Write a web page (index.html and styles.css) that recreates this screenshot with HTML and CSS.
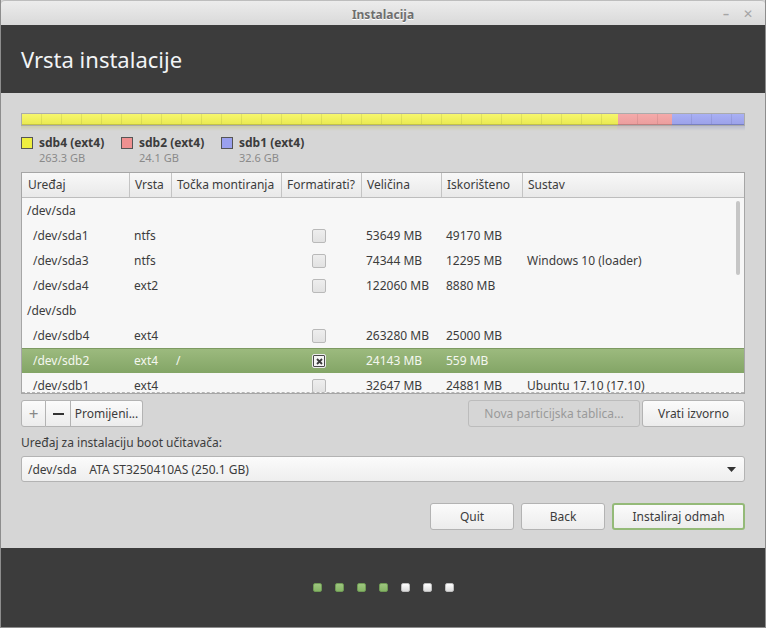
FILE: index.html
```html
<!DOCTYPE html>
<html>
<head>
<meta charset="utf-8">
<link rel="stylesheet" href="styles.css">
</head>
<body>
<div class="window">
  <div class="titlebar">
    <span class="title">Instalacija</span>
    <span class="wbtns"><span class="wmin">–</span><span class="wclose">✕</span></span>
  </div>
  <div class="header"><h1>Vrsta instalacije</h1></div>
  <div class="content">
    <div class="partbar">
      <div class="seg yellow" style="width:596px"></div>
      <div class="seg pink" style="width:54px"></div>
      <div class="seg blue" style="flex:1"></div>
    </div>
    <div class="reflect">
      <div class="rseg yellow" style="width:596px"></div>
      <div class="rseg pink" style="width:54px"></div>
      <div class="rseg blue" style="flex:1"></div>
    </div>
    <div class="legend">
      <div class="litem"><span class="sw yellow"></span><span class="lname">sdb4 (ext4)</span><span></span><span class="lsize">263.3 GB</span></div>
      <div class="litem"><span class="sw pink"></span><span class="lname">sdb2 (ext4)</span><span></span><span class="lsize">24.1 GB</span></div>
      <div class="litem"><span class="sw blue"></span><span class="lname">sdb1 (ext4)</span><span></span><span class="lsize">32.6 GB</span></div>
    </div>
    <div class="table">
      <div class="thead">
        <div class="th">Uređaj</div>
        <div class="th">Vrsta</div>
        <div class="th">Točka montiranja</div>
        <div class="th">Formatirati?</div>
        <div class="th">Veličina</div>
        <div class="th">Iskorišteno</div>
        <div class="th">Sustav</div>
      </div>
      <div class="tbody">
        <div class="row"><div class="td top">/dev/sda</div><div class="td"></div><div class="td"></div><div class="td"></div><div class="td"></div><div class="td"></div><div class="td"></div></div>
        <div class="row"><div class="td dev">/dev/sda1</div><div class="td">ntfs</div><div class="td"></div><div class="td chk"><span class="cb"></span></div><div class="td">53649 MB</div><div class="td">49170 MB</div><div class="td"></div></div>
        <div class="row"><div class="td dev">/dev/sda3</div><div class="td">ntfs</div><div class="td"></div><div class="td chk"><span class="cb"></span></div><div class="td">74344 MB</div><div class="td">12295 MB</div><div class="td">Windows 10 (loader)</div></div>
        <div class="row"><div class="td dev">/dev/sda4</div><div class="td">ext2</div><div class="td"></div><div class="td chk"><span class="cb"></span></div><div class="td">122060 MB</div><div class="td">8880 MB</div><div class="td"></div></div>
        <div class="row"><div class="td top">/dev/sdb</div><div class="td"></div><div class="td"></div><div class="td"></div><div class="td"></div><div class="td"></div><div class="td"></div></div>
        <div class="row"><div class="td dev">/dev/sdb4</div><div class="td">ext4</div><div class="td"></div><div class="td chk"><span class="cb"></span></div><div class="td">263280 MB</div><div class="td">25000 MB</div><div class="td"></div></div>
        <div class="row sel"><div class="td dev">/dev/sdb2</div><div class="td">ext4</div><div class="td">/</div><div class="td chk"><span class="cb on"><svg width="7" height="7" viewBox="0 0 7 7"><path d="M1 1L6 6M6 1L1 6" stroke="#3a3a3a" stroke-width="1.8"/></svg></span></div><div class="td">24143 MB</div><div class="td">559 MB</div><div class="td"></div></div>
        <div class="row"><div class="td dev">/dev/sdb1</div><div class="td">ext4</div><div class="td"></div><div class="td chk"><span class="cb"></span></div><div class="td">32647 MB</div><div class="td">24881 MB</div><div class="td">Ubuntu 17.10 (17.10)</div></div>
        <div class="scrollbar"></div>
      </div>
    </div>
    <div class="toolbar">
      <div class="group">
        <button class="btn sq plus">+</button><button class="btn sq minus"><svg width="11" height="2" viewBox="0 0 11 2"><rect width="11" height="2" fill="#333"/></svg></button><button class="btn prom">Promijeni...</button>
      </div>
      <div class="spacer"></div>
      <button class="btn disabled newtbl">Nova particijska tablica...</button>
      <button class="btn revert">Vrati izvorno</button>
    </div>
    <div class="label">Uređaj za instalaciju boot učitavača:</div>
    <div class="combo">
      <span>/dev/sda&nbsp;&nbsp;&nbsp; ATA ST3250410AS (250.1 GB)</span>
      <svg class="arrow" width="9" height="5" viewBox="0 0 9 5"><path d="M0 0H9L4.5 5Z" fill="#333"/></svg>
    </div>
    <div class="actions">
      <button class="btn act">Quit</button>
      <button class="btn act">Back</button>
      <button class="btn act primary">Instaliraj odmah</button>
    </div>
  </div>
  <div class="footer">
    <span class="dot g"></span><span class="dot g"></span><span class="dot g"></span><span class="dot g"></span><span class="dot w"></span><span class="dot w"></span><span class="dot w"></span>
  </div>
</div>
</body>
</html>
```
FILE: styles.css
```css
* { box-sizing: border-box; }
html, body { margin: 0; padding: 0; background: #3c3c3c; }
body { font-family: "Noto Sans", "DejaVu Sans", sans-serif; font-size: 12px; color: #3c3c3c; }

.window {
  width: 766px; height: 628px;
  border: 1px solid #8d8d8d; border-top: none;
  display: flex; flex-direction: column;
  overflow: hidden;
  background: #d6d6d6;
}

.titlebar {
  height: 25px; flex: none;
  background: linear-gradient(#ececec, #d9d9d9);
  border-top: 1px solid #bdbdbd;
  border-radius: 4px 4px 0 0;
  display: flex; align-items: center; justify-content: center;
  position: relative;
}
.title { font-weight: bold; font-size: 12px; color: #6e6e6e; text-shadow: 0 1px 0 #fff; margin-top: 2px; }
.wbtns { position: absolute; right: 12px; top: 4px; display: flex; gap: 14px; color: #a5a5a5; font-size: 12px; font-weight: bold; }
.wclose { font-size: 12px; }

.header { height: 68px; flex: none; background: #3c3c3c; display: flex; align-items: center; padding-left: 20px; }
.header h1 { margin: 0; font-weight: normal; font-size: 22px; color: #f2f4f6; letter-spacing: 0; margin-top: -1px; }

.content { height: 455px; flex: none; padding: 20px 20px 0 20px; background: #d6d6d6; }

.partbar {
  height: 13px; display: flex;
  border: 1px solid rgba(0,0,0,0.2);
}
.seg { height: 100%; position: relative; }
.seg.yellow { background: linear-gradient(#f6f66c, #eaea52); border-bottom: 1px solid #c2c248; }
.seg.pink { background: linear-gradient(#f4aaaa, #ec9e9e); border-bottom: 1px solid #c08080; }
.seg.blue { background: linear-gradient(#a9b0f4, #9ca2ea); border-bottom: 1px solid #7880c0; }
.partbar .seg::after {
  content: ""; position: absolute; inset: 0;
  background: repeating-linear-gradient(90deg, transparent 0 19px, rgba(0,0,0,0.08) 19px 20px);
}
.reflect { height: 5px; display: flex; opacity: 0.3; }
.rseg { height: 100%; -webkit-mask-image: linear-gradient(#000, transparent); mask-image: linear-gradient(#000, transparent); }
.rseg.yellow { background: #b8b850; }
.rseg.pink { background: #b88888; }
.rseg.blue { background: #8088c0; }

.legend { display: flex; margin-top: 5px; height: 36px; }
.litem {
  width: 100px; display: grid;
  grid-template-columns: 12px auto; column-gap: 6px; row-gap: 1px;
  align-content: start;
}
.sw { width: 12px; height: 12px; border: 1px solid #555; margin-top: 1px; }
.sw.yellow { background: #eeee40; }
.sw.pink { background: #ef9090; }
.sw.blue { background: #9aa0ee; }
.lname { font-weight: bold; font-size: 12px; line-height: 14px; color: #3c3c3c; }
.lsize { font-size: 11px; line-height: 14px; color: #8a8a8a; }

.table { border: 1px solid #a6a6a6; background: #f7f7f7; height: 222px; display: flex; flex-direction: column; }
.thead, .row {
  display: grid;
  grid-template-columns: 107px 42px 110px 80px 80px 81px 1fr;
}
.thead { height: 25px; background: linear-gradient(#f8f8f8, #e9e9e9); border-bottom: 1px solid #bdbdbd; flex: none; }
.th { padding-left: 6px; line-height: 24px; white-space: nowrap; overflow: hidden; color: #3c3c3c; }
.th + .th { border-left: 1px solid #c4c4c4; padding-left: 5px; }
.tbody { flex: 1; overflow: hidden; position: relative; border-bottom: 1px dashed #b4b4b4; }
.row { height: 25px; }
.td { line-height: 25px; white-space: nowrap; padding-left: 5px; color: #3c3c3c; }
.td:first-child { padding-left: 11px; }
.td.top:first-child { padding-left: 5px; }
.td.chk { display: flex; align-items: center; padding-left: 31px; }
.cb {
  width: 14px; height: 14px; border: 1px solid #b9b9b9; border-radius: 2px;
  background: linear-gradient(#eeeeee, #e2e2e2);
  display: flex; align-items: center; justify-content: center;
}
.cb.on { border: 1px solid #eaeaea; background: #f4f4f4; box-shadow: inset 0 0 0 1px #4a4a4a; }
.row.sel { background: linear-gradient(#9cba7e, #83a566); border-top: 1px solid #7d9a62; height: 25px; }
.row.sel .td { color: #f4f7f0; line-height: 23px; }
.scrollbar { position: absolute; right: 4px; top: 3px; width: 4px; height: 74px; border-radius: 2px; background: #c6c6c6; }

.toolbar { display: flex; margin-top: 6px; height: 27px; }
.group { display: flex; }
.spacer { flex: 1; }
.btn {
  font-family: inherit; font-size: 12px; color: #3c3c3c;
  background: linear-gradient(#fbfbfb, #ececec);
  border: 1px solid #b3b3b3; border-radius: 3px;
  height: 27px; padding: 0 6px; margin: 0;
  display: inline-flex; align-items: center; justify-content: center;
}
.group .btn { border-radius: 0; }
.group .btn:first-child { border-radius: 3px 0 0 3px; }
.group .btn:last-child { border-radius: 0 3px 3px 0; }
.group .btn + .btn { border-left: none; }
.sq { width: 25px; padding: 0; }
.plus { font-size: 17px; color: #888; font-weight: normal; }
.minus { width: 25px; }
.prom { width: 72px; }
.btn.disabled { background: #d6d6d6; color: #9a9a9a; border-color: #bcbcbc; }
.newtbl { width: 172px; margin-right: 2px; }
.revert { width: 103px; }

.label { margin-top: 8px; line-height: 16px; height: 16px; }
.combo {
  margin-top: 5px; height: 26px;
  border: 1px solid #b3b3b3; border-radius: 3px;
  background: linear-gradient(#fbfbfb, #eeeeee);
  display: flex; align-items: center; justify-content: space-between;
  padding: 0 8px 0 6px;
}
.actions { display: flex; justify-content: flex-end; gap: 7px; margin-top: 21px; }
.btn.act { width: 84px; }
.btn.primary { width: 133px; border: 2px solid #94ba78; }

.footer { flex: 1; background: #3c3c3c; display: flex; justify-content: center; align-items: center; gap: 13px; padding-bottom: 1px; }
.dot { width: 9px; height: 9px; border-radius: 2px; }
.dot.g { background: linear-gradient(#9ec67f, #86b566); border: 1px solid #6f9a55; }
.dot.w { background: linear-gradient(#ffffff, #dcdcdc); border: 1px solid #bdbdbd; }
```
